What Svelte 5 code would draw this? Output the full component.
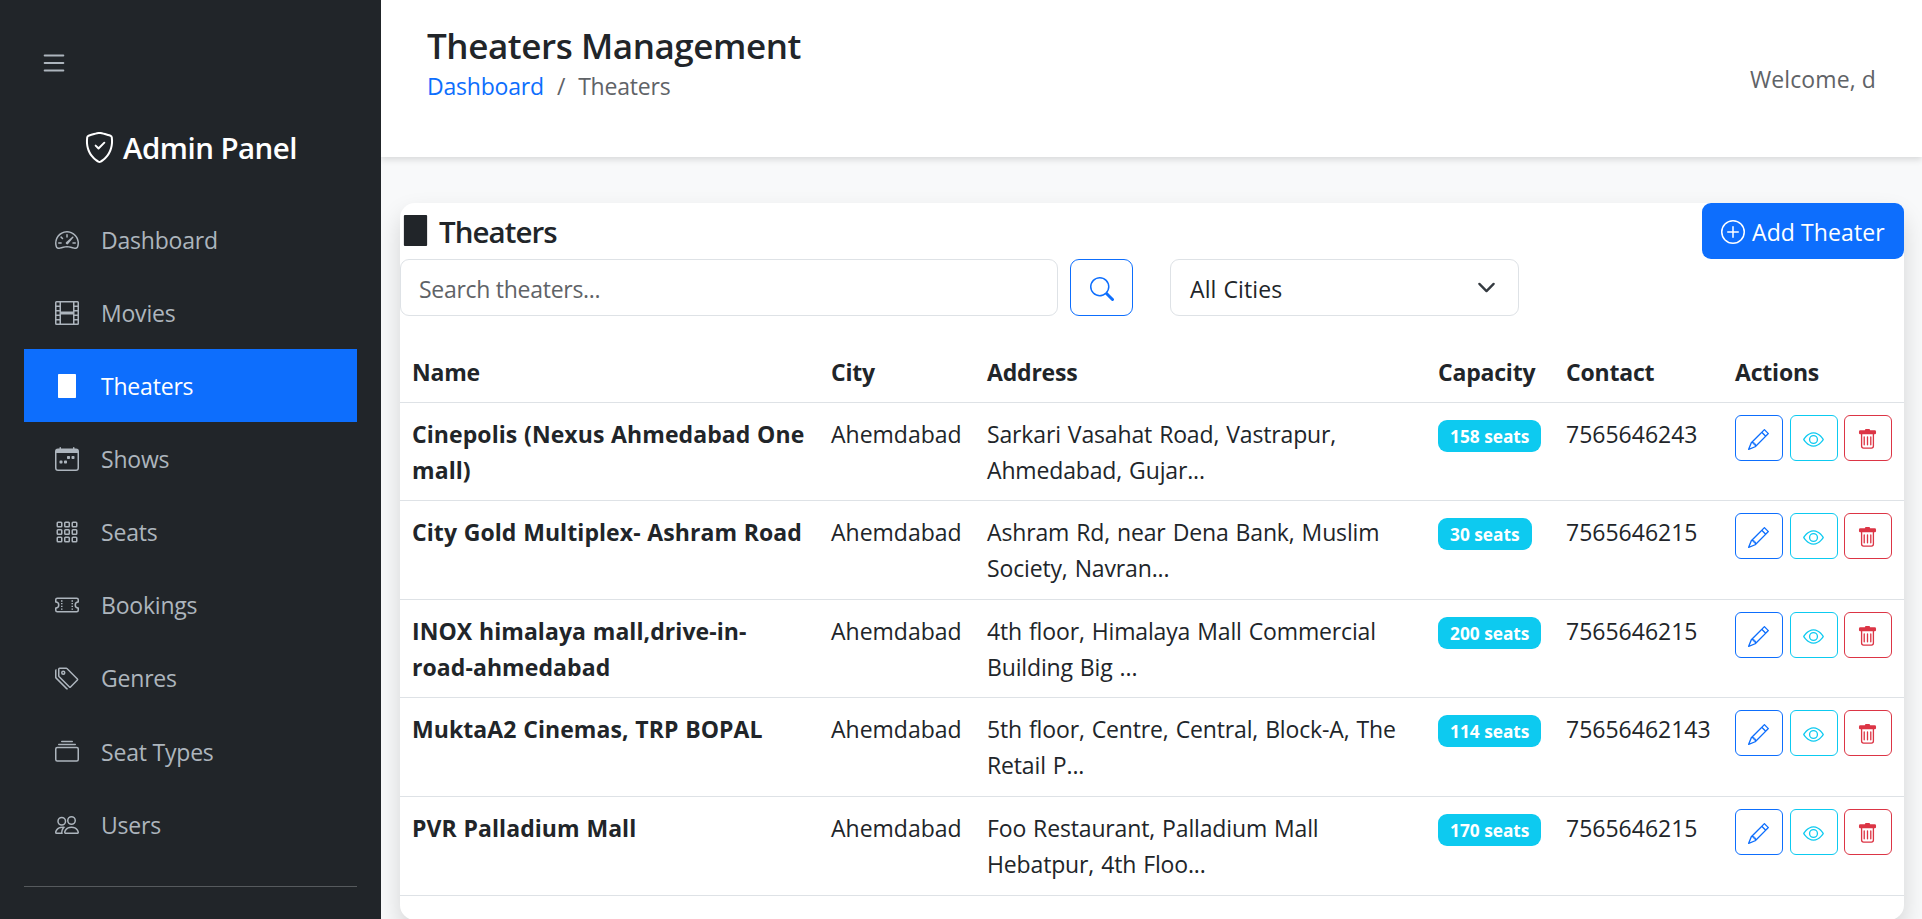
<script>
  const icons = {
    list: 'M2.5 12a.5.5 0 0 1 .5-.5h10a.5.5 0 0 1 0 1H3a.5.5 0 0 1-.5-.5m0-4a.5.5 0 0 1 .5-.5h10a.5.5 0 0 1 0 1H3a.5.5 0 0 1-.5-.5m0-4a.5.5 0 0 1 .5-.5h10a.5.5 0 0 1 0 1H3a.5.5 0 0 1-.5-.5',
    shield: 'M5.338 1.59a61 61 0 0 0-2.837.856.48.48 0 0 0-.328.39c-.554 4.157.726 7.19 2.253 9.188a10.7 10.7 0 0 0 2.287 2.233c.346.244.652.42.893.533q.18.085.293.118a1 1 0 0 0 .101.025 1 1 0 0 0 .1-.025q.114-.034.294-.118c.24-.113.547-.29.893-.533a10.7 10.7 0 0 0 2.287-2.233c1.527-1.997 2.807-5.031 2.253-9.188a.48.48 0 0 0-.328-.39c-.651-.213-1.75-.56-2.837-.855C9.552 1.29 8.531 1.067 8 1.067c-.53 0-1.552.223-2.662.524zM5.072.56C6.157.265 7.31 0 8 0s1.843.265 2.928.56c1.11.3 2.229.655 2.887.87a1.54 1.54 0 0 1 1.044 1.262c.596 4.477-.787 7.795-2.465 9.99a11.8 11.8 0 0 1-2.517 2.453 7 7 0 0 1-1.048.625c-.28.132-.581.24-.829.24s-.548-.108-.829-.24a7 7 0 0 1-1.048-.625 11.8 11.8 0 0 1-2.517-2.453C1.928 10.487.545 7.169 1.141 2.692A1.54 1.54 0 0 1 2.185 1.43 63 63 0 0 1 5.072.56M10.854 5.146a.5.5 0 0 1 0 .708l-3 3a.5.5 0 0 1-.708 0l-1.5-1.5a.5.5 0 1 1 .708-.708L7.5 7.793l2.646-2.647a.5.5 0 0 1 .708 0',
    speedometer: 'M8 4a.5.5 0 0 1 .5.5V6a.5.5 0 0 1-1 0V4.5A.5.5 0 0 1 8 4M3.732 5.732a.5.5 0 0 1 .707 0l.915.914a.5.5 0 1 1-.708.708l-.914-.915a.5.5 0 0 1 0-.707M2 10a.5.5 0 0 1 .5-.5h1.586a.5.5 0 0 1 0 1H2.5A.5.5 0 0 1 2 10m9.5 0a.5.5 0 0 1 .5-.5h1.5a.5.5 0 0 1 0 1H12a.5.5 0 0 1-.5-.5m.754-4.246a.39.39 0 0 0-.527-.02L7.547 9.31a.91.91 0 1 0 1.302 1.258l3.434-4.297a.39.39 0 0 0-.029-.518zM0 10a8 8 0 1 1 15.547 2.661c-.442 1.253-1.845 1.602-2.932 1.25C11.309 13.488 9.475 13 8 13c-1.474 0-3.31.488-4.615.911-1.087.352-2.49.003-2.932-1.25A8 8 0 0 1 0 10m8-7a7 7 0 0 0-6.603 9.329c.203.575.923.876 1.68.63C4.397 12.533 6.358 12 8 12s3.604.532 4.923.96c.757.245 1.477-.056 1.68-.631A7 7 0 0 0 8 3',
    film: 'M0 1a1 1 0 0 1 1-1h14a1 1 0 0 1 1 1v14a1 1 0 0 1-1 1H1a1 1 0 0 1-1-1zm4 0v6h8V1zm8 8H4v6h8zM1 1v2h2V1zm2 3H1v2h2zM1 7v2h2V7zm2 3H1v2h2zm-2 3v2h2v-2zM15 1h-2v2h2zm-2 3v2h2V4zm2 3h-2v2h2zm-2 3v2h2v-2zm2 3h-2v2h2z',
    block: 'M2.5 0h11a.5.5 0 0 1 .5.5v15a.5.5 0 0 1-.5.5h-11a.5.5 0 0 1-.5-.5V.5a.5.5 0 0 1 .5-.5',
    calendar: 'M11 6.5a.5.5 0 0 1 .5-.5h1a.5.5 0 0 1 .5.5v1a.5.5 0 0 1-.5.5h-1a.5.5 0 0 1-.5-.5zm-3 0a.5.5 0 0 1 .5-.5h1a.5.5 0 0 1 .5.5v1a.5.5 0 0 1-.5.5h-1a.5.5 0 0 1-.5-.5zm-5 3a.5.5 0 0 1 .5-.5h1a.5.5 0 0 1 .5.5v1a.5.5 0 0 1-.5.5h-1a.5.5 0 0 1-.5-.5zm3 0a.5.5 0 0 1 .5-.5h1a.5.5 0 0 1 .5.5v1a.5.5 0 0 1-.5.5h-1a.5.5 0 0 1-.5-.5zM3.5 0a.5.5 0 0 1 .5.5V1h8V.5a.5.5 0 0 1 1 0V1h1a2 2 0 0 1 2 2v11a2 2 0 0 1-2 2H2a2 2 0 0 1-2-2V3a2 2 0 0 1 2-2h1V.5a.5.5 0 0 1 .5-.5M1 4v10a1 1 0 0 0 1 1h12a1 1 0 0 0 1-1V4z',
    grid: [1, 6, 11].flatMap((y) => [1, 6, 11].map((x) => `M${x + 1} ${y}h2a1 1 0 0 1 1 1v2a1 1 0 0 1-1 1h-2a1 1 0 0 1-1-1v-2a1 1 0 0 1 1-1m0 1v2h2v-2z`)).join(''),
    ticket: 'M4 4.85v.9h1v-.9zm7 0v.9h1v-.9zm-7 1.8v.9h1v-.9zm7 0v.9h1v-.9zm-7 1.8v.9h1v-.9zm7 0v.9h1v-.9zm-7 1.8v.9h1v-.9zm7 0v.9h1v-.9zM1.5 3A1.5 1.5 0 0 0 0 4.5V6a.5.5 0 0 0 .5.5 1.5 1.5 0 1 1 0 3 .5.5 0 0 0-.5.5v1.5A1.5 1.5 0 0 0 1.5 13h13a1.5 1.5 0 0 0 1.5-1.5V10a.5.5 0 0 0-.5-.5 1.5 1.5 0 0 1 0-3A.5.5 0 0 0 16 6V4.5A1.5 1.5 0 0 0 14.5 3zM1 4.5a.5.5 0 0 1 .5-.5h13a.5.5 0 0 1 .5.5v1.05a2.5 2.5 0 0 0 0 4.9v1.05a.5.5 0 0 1-.5.5h-13a.5.5 0 0 1-.5-.5v-1.05a2.5 2.5 0 0 0 0-4.9z',
    tags: 'M3 2v4.586l7 7L14.586 9l-7-7zM2 2a1 1 0 0 1 1-1h4.586a1 1 0 0 1 .707.293l7 7a1 1 0 0 1 0 1.414l-4.586 4.586a1 1 0 0 1-1.414 0l-7-7A1 1 0 0 1 2 6.586zM5.5 5a.5.5 0 1 1 0-1 .5.5 0 0 1 0 1m0 1a1.5 1.5 0 1 0 0-3 1.5 1.5 0 0 0 0 3M1 7.086a1 1 0 0 0 .293.707L8.75 15.25l-.043.043a1 1 0 0 1-1.414 0l-7-7A1 1 0 0 1 0 7.586V3a1 1 0 0 1 1-1z',
    collection: 'M2.5 3.5a.5.5 0 0 1 0-1h11a.5.5 0 0 1 0 1zm2-2a.5.5 0 0 1 0-1h7a.5.5 0 0 1 0 1zM0 13a1.5 1.5 0 0 0 1.5 1.5h13A1.5 1.5 0 0 0 16 13V6a1.5 1.5 0 0 0-1.5-1.5h-13A1.5 1.5 0 0 0 0 6zm1.5.5A.5.5 0 0 1 1 13V6a.5.5 0 0 1 .5-.5h13a.5.5 0 0 1 .5.5v7a.5.5 0 0 1-.5.5z',
    people: 'M15 14s1 0 1-1-1-4-5-4-5 3-5 4 1 1 1 1zm-7.978-1L7 12.996c.001-.264.167-1.03.76-1.72C8.312 10.629 9.282 10 11 10c1.717 0 2.687.63 3.24 1.276.593.69.758 1.457.76 1.72l-.008.002-.014.002zM11 7a2 2 0 1 0 0-4 2 2 0 0 0 0 4m3-2a3 3 0 1 1-6 0 3 3 0 0 1 6 0M6.936 9.28a6 6 0 0 0-1.23-.247A7 7 0 0 0 5 9c-4 0-5 3-5 4q0 1 1 1h4.216A2.24 2.24 0 0 1 5 13c0-1.01.377-2.042 1.09-2.904.243-.294.526-.569.846-.816M4.92 10A5.5 5.5 0 0 0 4 13H1c0-.26.164-1.03.76-1.724.545-.636 1.492-1.256 3.16-1.275ZM1.5 5.5a3 3 0 1 1 6 0 3 3 0 0 1-6 0m3-2a2 2 0 1 0 0 4 2 2 0 0 0 0-4',
    plus: 'M8 15A7 7 0 1 1 8 1a7 7 0 0 1 0 14m0 1A8 8 0 1 0 8 0a8 8 0 0 0 0 16M8 4a.5.5 0 0 1 .5.5v3h3a.5.5 0 0 1 0 1h-3v3a.5.5 0 0 1-1 0v-3h-3a.5.5 0 0 1 0-1h3v-3A.5.5 0 0 1 8 4',
    search: 'M11.742 10.344a6.5 6.5 0 1 0-1.397 1.398h-.001q.044.06.098.115l3.85 3.85a1 1 0 0 0 1.415-1.414l-3.85-3.85a1 1 0 0 0-.115-.1zM12 6.5a5.5 5.5 0 1 1-11 0 5.5 5.5 0 0 1 11 0',
    pencil: 'M12.146.146a.5.5 0 0 1 .708 0l3 3a.5.5 0 0 1 0 .708l-10 10a.5.5 0 0 1-.168.11l-5 2a.5.5 0 0 1-.65-.65l2-5a.5.5 0 0 1 .11-.168zM11.207 2.5 13.5 4.793 14.793 3.5 12.5 1.207zm1.586 3L10.5 3.207 4 9.707V10h.5a.5.5 0 0 1 .5.5v.5h.5a.5.5 0 0 1 .5.5v.5h.293zm-9.761 5.175-.106.106-1.528 3.821 3.821-1.528.106-.106A.5.5 0 0 1 5 12.5V12h-.5a.5.5 0 0 1-.5-.5V11h-.5a.5.5 0 0 1-.468-.325',
    eye: 'M16 8s-3-5.5-8-5.5S0 8 0 8s3 5.5 8 5.5S16 8 16 8M1.173 8a13 13 0 0 1 1.66-2.043C4.12 4.668 5.88 3.5 8 3.5s3.879 1.168 5.168 2.457A13 13 0 0 1 14.828 8q-.086.13-.195.288c-.335.48-.83 1.12-1.465 1.755C11.879 11.332 10.119 12.5 8 12.5s-3.879-1.168-5.168-2.457A13 13 0 0 1 1.172 8zM8 5.5a2.5 2.5 0 1 0 0 5 2.5 2.5 0 0 0 0-5M4.5 8a3.5 3.5 0 1 1 7 0 3.5 3.5 0 0 1-7 0',
    trash: 'M5.5 5.5A.5.5 0 0 1 6 6v6a.5.5 0 0 1-1 0V6a.5.5 0 0 1 .5-.5m2.5 0a.5.5 0 0 1 .5.5v6a.5.5 0 0 1-1 0V6a.5.5 0 0 1 .5-.5m3 .5a.5.5 0 0 0-1 0v6a.5.5 0 0 0 1 0zM14.5 3a1 1 0 0 1-1 1H13v9a2 2 0 0 1-2 2H5a2 2 0 0 1-2-2V4h-.5a1 1 0 0 1-1-1V2a1 1 0 0 1 1-1H6a1 1 0 0 1 1-1h2a1 1 0 0 1 1 1h3.5a1 1 0 0 1 1 1zM4.118 4 4 4.059V13a1 1 0 0 0 1 1h6a1 1 0 0 0 1-1V4.059L11.882 4z'
  };

  const nav = [
    ['speedometer', 'Dashboard'],
    ['film', 'Movies'],
    ['block', 'Theaters'],
    ['calendar', 'Shows'],
    ['grid', 'Seats'],
    ['ticket', 'Bookings'],
    ['tags', 'Genres'],
    ['collection', 'Seat Types'],
    ['people', 'Users']
  ];
  const active = 'Theaters';

  const theaters = [
    { name: ['Cinepolis (Nexus Ahmedabad One', 'mall)'], address: ['Sarkari Vasahat Road, Vastrapur,', 'Ahmedabad, Gujar...'], seats: 158, contact: '7565646243' },
    { name: ['City Gold Multiplex- Ashram Road'], address: ['Ashram Rd, near Dena Bank, Muslim', 'Society, Navran...'], seats: 30, contact: '7565646215' },
    { name: ['INOX himalaya mall,drive-in-', 'road-ahmedabad'], address: ['4th floor, Himalaya Mall Commercial', 'Building Big ...'], seats: 200, contact: '7565646215' },
    { name: ['MuktaA2 Cinemas, TRP BOPAL'], address: ['5th floor, Centre, Central, Block-A, The', 'Retail P...'], seats: 114, contact: '75656462143' },
    { name: ['PVR Palladium Mall'], address: ['Foo Restaurant, Palladium Mall', 'Hebatpur, 4th Floo...'], seats: 170, contact: '7565646215' }
  ];
</script>

{#snippet icon(name)}
  <svg class="icon" viewBox="0 0 16 16" fill="currentColor" fill-rule="evenodd" aria-hidden="true"><path d={icons[name]} /></svg>
{/snippet}

<div class="app">
  <aside class="sidebar">
    <button class="toggle" aria-label="Toggle sidebar">{@render icon('list')}</button>
    <h4 class="brand">{@render icon('shield')}<span>Admin Panel</span></h4>
    <nav>
      {#each nav as [glyph, label]}
        <a href="#{glyph}" class="nav-link" class:active={label === active}>
          {@render icon(glyph)}<span>{label}</span>
        </a>
      {/each}
    </nav>
    <hr />
  </aside>

  <main class="main">
    <header class="topbar">
      <div>
        <h1>Theaters Management</h1>
        <div class="breadcrumb">
          <a href="#dashboard">Dashboard</a><span class="slash">/</span><span>Theaters</span>
        </div>
      </div>
      <span class="welcome">Welcome, d</span>
    </header>

    <section class="card">
      <div class="card-head">
        <h2>{@render icon('block')}<span>Theaters</span></h2>
        <button class="add">{@render icon('plus')}<span>Add Theater</span></button>
      </div>

      <div class="filters">
        <input type="text" placeholder="Search theaters..." />
        <button class="search" aria-label="Search">{@render icon('search')}</button>
        <div class="select">
          <span>All Cities</span>
          <svg class="chevron" viewBox="0 0 16 16" fill="none" stroke="#343a40" stroke-width="2" stroke-linecap="round" stroke-linejoin="round"><path d="m2 5 6 6 6-6" /></svg>
        </div>
      </div>

      <table>
        <colgroup>
          <col class="c-name" /><col class="c-city" /><col class="c-address" /><col class="c-capacity" /><col class="c-contact" /><col class="c-actions" />
        </colgroup>
        <thead>
          <tr><th>Name</th><th>City</th><th>Address</th><th>Capacity</th><th>Contact</th><th>Actions</th></tr>
        </thead>
        <tbody>
          {#each theaters as t}
            <tr>
              <td class="name">{#each t.name as line}<div>{line}</div>{/each}</td>
              <td>Ahemdabad</td>
              <td class="address">{#each t.address as line}<div>{line}</div>{/each}</td>
              <td><span class="badge">{t.seats} seats</span></td>
              <td>{t.contact}</td>
              <td>
                <div class="actions">
                  <button class="edit" aria-label="Edit">{@render icon('pencil')}</button>
                  <button class="view" aria-label="View">{@render icon('eye')}</button>
                  <button class="delete" aria-label="Delete">{@render icon('trash')}</button>
                </div>
              </td>
            </tr>
          {/each}
        </tbody>
      </table>
    </section>
  </main>
</div>

<style>
  :global(body) {
    margin: 0;
    overflow: hidden;
  }
  * {
    box-sizing: border-box;
  }
  .app {
    display: flex;
    height: 919px;
    overflow: hidden;
    background: #f8f9fa;
    color: #212529;
    font: 400 23px/36px 'Open Sans', 'Noto Sans', sans-serif;
    letter-spacing: -0.2px;
  }
  h1, h2, h4 {
    margin: 0;
    font-weight: 600;
  }
  a {
    text-decoration: none;
  }
  button {
    font: inherit;
    letter-spacing: inherit;
    padding: 0;
    margin: 0;
    background: none;
  }
  span, td, th, h1, div {
    white-space: nowrap;
  }
  .icon {
    display: block;
    flex: none;
    width: 24px;
    height: 24px;
  }

  .sidebar {
    position: relative;
    z-index: 2;
    flex: none;
    width: 381px;
    padding: 48px 24px 0;
    background: #212529;
  }
  .toggle {
    display: block;
    margin-left: 15px;
    border: 0;
    color: #adb5bd;
  }
  .toggle .icon {
    width: 30px;
    height: 30px;
  }
  .brand {
    display: flex;
    align-items: center;
    justify-content: center;
    gap: 8px;
    height: 36px;
    margin: 52px 0 37px;
    color: #fff;
    font-size: 29.5px;
    font-weight: 650;
    letter-spacing: -0.55px;
  }
  .brand .icon {
    width: 31px;
    height: 31px;
    margin-bottom: 2px;
  }
  .nav-link {
    display: flex;
    align-items: center;
    gap: 22px;
    height: 73.15px;
    padding: 0 31px;
    color: #adb5bd;
  }
  .nav-link.active {
    background: #0d6efd;
    color: #fff;
  }
  hr {
    height: 1px;
    margin: 24.6px 0 0;
    border: 0;
    background: #565a5d;
  }

  .main {
    flex: 1;
    min-width: 0;
  }
  .topbar {
    position: relative;
    z-index: 1;
    display: flex;
    justify-content: space-between;
    align-items: flex-start;
    height: 157px;
    padding: 24px 46px 0;
    background: #fff;
    box-shadow: 0 3px 6px rgba(0, 0, 0, 0.12);
  }
  h1 {
    font-size: 35px;
    line-height: 43px;
    letter-spacing: -0.42px;
  }
  .breadcrumb {
    display: flex;
    gap: 13px;
    margin-top: 1px;
    color: #5f6367;
  }
  .breadcrumb a {
    color: #0d6efd;
  }
  .welcome {
    margin-top: 37px;
    color: #5f6367;
    letter-spacing: 0.1px;
  }

  .card {
    height: 717px;
    margin: 46px 18px 0 19px;
    border-radius: 15px;
    background: #fff;
    box-shadow: 0 12px 24px rgba(0, 0, 0, 0.15);
  }
  .card-head {
    display: flex;
    justify-content: space-between;
    height: 56px;
  }
  h2 {
    display: flex;
    align-items: center;
    gap: 8px;
    height: 56px;
    font-size: 29.5px;
    letter-spacing: -0.95px;
  }
  h2 .icon {
    width: 31px;
    height: 31px;
    margin-bottom: 2px;
  }
  h2 span {
    padding-top: 1px;
  }
  .add {
    display: flex;
    align-items: center;
    gap: 7px;
    width: 202px;
    height: 56px;
    padding-left: 19px;
    border: 0;
    border-radius: 9px;
    background: #0d6efd;
    color: #fff;
    letter-spacing: 0.1px;
  }
  .add .icon {
    margin-top: 2px;
  }
  .add span,
  .select span {
    padding-top: 2px;
  }
  .filters {
    display: flex;
    height: 57px;
  }
  input {
    width: 658px;
    padding: 2px 18px 0;
    border: 1px solid #dee2e6;
    border-radius: 9px;
    background: #fff;
    font: inherit;
    letter-spacing: -0.28px;
  }
  input::placeholder {
    color: #5f6367;
    opacity: 1;
  }
  .search {
    display: flex;
    align-items: center;
    justify-content: center;
    width: 63px;
    margin: 0 37px 0 12px;
    border: 1px solid #0d6efd;
    border-radius: 9px;
    color: #0d6efd;
  }
  .search .icon {
    margin-top: 2px;
  }
  .select {
    display: flex;
    align-items: center;
    justify-content: space-between;
    width: 349px;
    padding: 0 22px 0 19px;
    border: 1px solid #dee2e6;
    border-radius: 9px;
    letter-spacing: 0.1px;
    word-spacing: 1px;
  }
  .chevron {
    width: 19px;
    height: 19px;
  }

  table {
    width: 1504px;
    margin-top: 25px;
    border-collapse: separate;
    border-spacing: 0;
    table-layout: fixed;
  }
  .c-name { width: 419px; }
  .c-city { width: 156px; }
  .c-address { width: 451px; }
  .c-capacity { width: 128px; }
  .c-contact { width: 169px; }
  .c-actions { width: 181px; }
  th, td {
    padding: 13px 12px 0;
    border-bottom: 1px solid #dee2e6;
    text-align: left;
    vertical-align: top;
  }
  th {
    height: 62px;
    font-weight: 700;
  }
  td {
    height: 99px;
    letter-spacing: 0;
  }
  tr:nth-child(1) td,
  tr:nth-child(3) td {
    height: 98px;
  }
  .name {
    font-weight: 700;
    letter-spacing: 0.08px;
    word-spacing: 0.6px;
  }
  .address {
    letter-spacing: -0.15px;
    word-spacing: 1.2px;
  }
  .badge {
    display: inline-block;
    height: 32px;
    margin-top: 4px;
    padding: 0 12px;
    border-radius: 9px;
    background: #0dcaf0;
    color: #fff;
    font-size: 17.3px;
    font-weight: 700;
    line-height: 33px;
    vertical-align: top;
  }
  .actions {
    display: flex;
    gap: 6.5px;
    margin-top: -1px;
  }
  .actions button {
    display: flex;
    align-items: center;
    justify-content: center;
    width: 48px;
    height: 46px;
    padding-top: 2px;
    border: 1px solid;
    border-radius: 6px;
  }
  .actions .icon {
    width: 21px;
    height: 21px;
  }
  .edit,
  .delete {
    padding-right: 2px;
  }
  .edit { color: #0d6efd; }
  .view { color: #0dcaf0; }
  .delete { color: #dc3545; }
</style>
